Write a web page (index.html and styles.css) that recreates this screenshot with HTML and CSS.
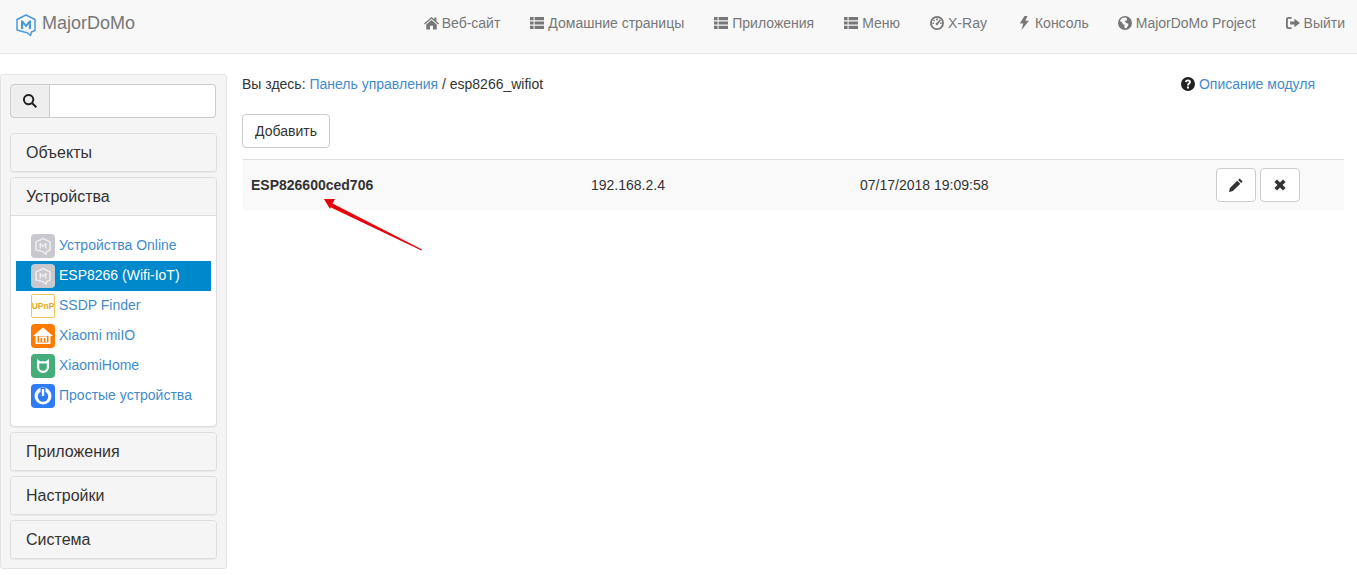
FILE: index.html
```html
<!DOCTYPE html>
<html lang="en">
<head>
    <meta charset="UTF-8">
    <meta name="viewport" content="width=device-width, initial-scale=1.0">
    <title>MajorDoMo</title>
    <link rel="stylesheet" href="styles.css">
</head>
<body>

    <svg class="sprites" width="0" height="0">
        <symbol id="i-home" viewBox="0 0 16 14"><path d="M8 0.500l3 2.600V1.200h2.200v3.800L16 7.500l-0.900 1L8 2.400 0.900 8.500 0 7.500z M2.400 8.600L8 3.800l5.600 4.800V14H9.600V10H6.400v4H2.400z"/></symbol>
        <symbol id="i-list" viewBox="0 0 14 12"><path d="M0 0h3.600v3.200H0z M4.600 0H14v3.200H4.600z M0 4.400h3.600v3.200H0z M4.600 4.400H14v3.200H4.600z M0 8.800h3.600V12H0z M4.600 8.800H14V12H4.600z"/></symbol>
        <symbol id="i-gauge" viewBox="0 0 14 14"><path fill-rule="evenodd" d="M7 0a7 7 0 1 1 0 14A7 7 0 0 1 7 0z M7 1.800a5.200 5.200 0 1 0 0 10.400A5.200 5.200 0 0 0 7 1.800z M6.100 2.600h1.800v1.600H6.100z M3 4.400l1.100-1 1.100 1.100-1.100 1z M9.900 3.300l1.100 1-3 3.600a1.200 1.200 0 1 1-1.200-1.100z M2.400 6.400H4V8H2.400z M10 6.400h1.600V8H10z"/></symbol>
        <symbol id="i-flash" viewBox="0 0 10 14"><path d="M5.500 0h3L6.400 4.800H10L2.500 14l1.800-6.600H0.800z"/></symbol>
        <symbol id="i-globe" viewBox="0 0 14 14"><path fill-rule="evenodd" d="M7 0a7 7 0 1 1 0 14A7 7 0 0 1 7 0z M5 1.800C3.600 2.400 2.400 3.600 1.900 5l2 1.200 1 2 1.700 0.600-0.400 2 1.200 1.600 1-0.200 1.600-2.400 0.400-2-2.200-0.800-1.400-1.400 1-1.200 1.200 0.200L9 2.200 7.200 1.400z"/></symbol>
        <symbol id="i-exit" viewBox="0 0 15 13"><path d="M6 0v2H3a1 1 0 0 0-1 1v7a1 1 0 0 0 1 1h3v2H2.600A2.600 2.600 0 0 1 0 10.400V2.600A2.600 2.600 0 0 1 2.600 0z M9 2l6 4.500L9 11V8.200H4.400V4.800H9z"/></symbol>
        <symbol id="i-help" viewBox="0 0 14 14"><path fill-rule="evenodd" d="M7 0a7 7 0 1 1 0 14A7 7 0 0 1 7 0z M6 9.400v2h2v-2z M7 2.600C5.400 2.600 4.300 3.400 4.100 5l1.800 0.300C6 4.700 6.300 4.300 7 4.300c0.600 0 1 0.300 1 0.800 0 0.900-2 1.300-2 3.400h1.900c0-1.400 2-1.700 2-3.600 0-1.400-1.200-2.300-2.900-2.300z"/></symbol>
        <symbol id="i-search" viewBox="0 0 14 14"><path fill-rule="evenodd" d="M5.600 0a5.600 5.600 0 0 1 4.600 8.800L14 12.600 12.600 14 8.800 10.200A5.600 5.600 0 1 1 5.600 0z M5.600 1.900a3.700 3.700 0 1 0 0 7.400 3.700 3.700 0 0 0 0-7.400z"/></symbol>
        <symbol id="i-pencil" viewBox="0 0 14 14"><path d="M10.600 0.400l3 3-1.500 1.500-3-3z M8.300 2.700l3 3-7.400 7.400L0 14l0.900-3.900z"/></symbol>
        <symbol id="i-remove" viewBox="0 0 12 12"><path d="M3 0.400L6 3.400l3-3L11.600 3l-3 3 3 3L9 11.600l-3-3-3 3L0.400 9l3-3-3-3z"/></symbol>
        <symbol id="i-brand" viewBox="0 0 20 23"><path d="M10 1l9 4.500v11l-3.500 1.500-1 3.500-3.500-3-1 0-9-2.500v-10.500z" fill="none" stroke="currentColor" stroke-width="1.500" stroke-linejoin="round"/><path d="M5 15V6.500h1.800L10 10.500l3.200-4H15V15h-2.200v-5L10 13.500 7.200 10v5z" fill="currentColor"/></symbol>
        <symbol id="i-mdm" viewBox="0 0 24 24"><path d="M12 4.500l7 3.400v8l-3 1.300-1 2.800-3-2.400-7-1.700V7.900z" fill="none" stroke="currentColor" stroke-width="1.500"/><path d="M8.500 14.500V9h1.300l2.200 2.600L14.200 9h1.300v5.500H14v-3.200L12 13.600l-2-2.300v3.200z" fill="currentColor"/></symbol>
    </svg>

    <nav class="navbar">
        <a class="brand" href="#">
            <svg class="brand-logo"><use href="#i-brand"/></svg>
            MajorDoMo
        </a>
        <div class="nav-links">
            <a href="#"><svg class="ico w15"><use href="#i-home"/></svg>Веб-сайт</a>
            <a href="#"><svg class="ico"><use href="#i-list"/></svg>Домашние страницы</a>
            <a href="#"><svg class="ico"><use href="#i-list"/></svg>Приложения</a>
            <a href="#"><svg class="ico"><use href="#i-list"/></svg>Меню</a>
            <a href="#"><svg class="ico"><use href="#i-gauge"/></svg>X-Ray</a>
            <a href="#"><svg class="ico"><use href="#i-flash"/></svg>Консоль</a>
            <a href="#" class="tight"><svg class="ico"><use href="#i-globe"/></svg>MajorDoMo Project</a>
            <a href="#"><svg class="ico"><use href="#i-exit"/></svg>Выйти</a>
        </div>
    </nav>

    <div class="page">
        <aside class="well">
            <div class="search-group">
                <span class="search-addon"><svg class="ico-search"><use href="#i-search"/></svg></span>
                <input type="text" class="search-input">
            </div>

            <div class="panel"><div class="panel-heading">Объекты</div></div>

            <div class="panel">
                <div class="panel-heading open">Устройства</div>
                <ul class="panel-body">
                    <li><a href="#">
                        <span class="app-icon grey"><svg><use href="#i-mdm"/></svg></span><span>Устройства Online</span>
                    </a></li>
                    <li class="active"><a href="#">
                        <span class="app-icon grey"><svg><use href="#i-mdm"/></svg></span><span>ESP8266 (Wifi-IoT)</span>
                    </a></li>
                    <li><a href="#">
                        <span class="app-icon upnp">UPnP</span><span>SSDP Finder</span>
                    </a></li>
                    <li><a href="#">
                        <span class="app-icon orange">
                            <svg viewBox="0 0 24 24"><path d="M12 3.500L22 12h-2.500v8h-15v-8H2z" fill="#fff"/><path d="M6.500 12h11v6.500h-11z" fill="#ff7a00"/><path d="M8 12.500h8V18h-1.500v-4h-1.700v4h-1.600v-4H9.500v4H8z" fill="#fff"/></svg>
                        </span><span>Xiaomi miIO</span>
                    </a></li>
                    <li><a href="#">
                        <span class="app-icon green">
                            <svg viewBox="0 0 24 24"><path d="M6 5l3 2.200h6L18 5v8a6 6 0 0 1-12 0z M8.200 9.500v3.500a3.800 3.800 0 0 0 7.600 0V9.500z" fill="#fff" fill-rule="evenodd"/></svg>
                        </span><span>XiaomiHome</span>
                    </a></li>
                    <li><a href="#">
                        <span class="app-icon blue">
                            <svg viewBox="0 0 24 24"><circle cx="12" cy="12" r="8.500" fill="#fff"/><circle cx="12" cy="12.500" r="5.200" fill="#2f7bf5"/><path d="M12 4v8" stroke="#2f7bf5" stroke-width="5"/><path d="M12 5v7" stroke="#fff" stroke-width="2.400"/></svg>
                        </span><span>Простые устройства</span>
                    </a></li>
                </ul>
            </div>

            <div class="panel"><div class="panel-heading">Приложения</div></div>
            <div class="panel"><div class="panel-heading">Настройки</div></div>
            <div class="panel"><div class="panel-heading">Система</div></div>
        </aside>

        <main class="content">
            <div class="crumbs-row">
                <div>Вы здесь: <a href="#">Панель управления</a> / esp8266_wifiot</div>
                <div class="help-link"><svg class="ico-help"><use href="#i-help"/></svg><a href="#">Описание модуля</a></div>
            </div>

            <button class="btn add-btn">Добавить</button>

            <div class="device-row">
                <b class="col-name">ESP826600ced706</b>
                <span class="col-ip">192.168.2.4</span>
                <span class="col-date">07/17/2018 19:09:58</span>
                <span class="col-actions">
                    <button class="btn btn-icon"><svg><use href="#i-pencil"/></svg></button>
                    <button class="btn btn-icon"><svg class="small"><use href="#i-remove"/></svg></button>
                </span>
            </div>
        </main>
    </div>

    <!-- red arrow drawn over the page -->
    <svg class="arrow" width="120" height="70" viewBox="0 0 120 70">
        <path d="M2 6L13 6 10.500 10.500 100 56.500 99.400 57.600 8.500 14.200 8 16z" fill="#e8000b"/>
    </svg>

</body>
</html>
```

FILE: styles.css
```css
* {
    box-sizing: border-box;
}
body {
    font-family: "Liberation Sans", Arial, sans-serif;
    font-size: 14px;
    line-height: 20px;
    color: #333;
    background-color: #fff;
    margin: 0;
    height: 575px;
    overflow: hidden;
    position: relative;
}
a {
    color: #428bca;
    text-decoration: none;
}
.sprites {
    position: absolute;
}

/* top bar */
.navbar {
    height: 54px;
    background-color: #f8f8f8;
    border-bottom: 1px solid #e7e7e7;
    display: flex;
    justify-content: space-between;
    align-items: center;
    padding: 0 12px 8px 16px;
}
.brand {
    display: flex;
    align-items: center;
    font-size: 18px;
    color: #777;
}
.brand-logo {
    width: 20px;
    height: 23px;
    margin: 5px 6px 0 0;
    color: #4a9ad8;
}
.nav-links {
    display: flex;
    gap: 30px;
}
.nav-links a {
    display: flex;
    align-items: center;
    color: #777;
}
.nav-links a.tight {
    margin-left: -1px;
}
.ico {
    width: 14px;
    height: 14px;
    margin-right: 4px;
    fill: #777;
}
.ico.w15 {
    width: 15px;
    margin-right: 3px;
}

/* sidebar */
.page {
    display: flex;
}
.well {
    width: 227px;
    height: 495px;
    margin-top: 20px;
    padding: 9px 9px 0 9px;
    background-color: #f5f5f5;
    border: 1px solid #e3e3e3;
    border-radius: 3px;
    flex: none;
}
.search-group {
    display: flex;
    height: 34px;
    margin-right: 1px;
    margin-bottom: 15px;
}
.search-addon {
    width: 40px;
    background-color: #eee;
    border: 1px solid #ccc;
    border-radius: 4px 0 0 4px;
    display: flex;
    align-items: center;
    justify-content: center;
}
.ico-search {
    width: 14px;
    height: 14px;
    fill: #222;
}
.search-input {
    flex: 1;
    min-width: 0;
    border: 1px solid #ccc;
    border-left: none;
    border-radius: 0 4px 4px 0;
    background-color: #fff;
}
.panel {
    background-color: #fff;
    border: 1px solid #ddd;
    border-radius: 4px;
    margin-bottom: 5px;
    box-shadow: 0 1px 1px rgba(0, 0, 0, 0.05);
}
.panel-heading {
    height: 37px;
    padding: 0 15px;
    font-size: 16px;
    line-height: 37px;
    background-color: #f5f5f5;
    border-radius: 3px;
}
.panel-heading.open {
    height: 38px;
    border-bottom: 1px solid #ddd;
    border-radius: 3px 3px 0 0;
}
.panel-body {
    list-style: none;
    margin: 0;
    padding: 15px 5px;
}
.panel-body a {
    display: flex;
    align-items: center;
    height: 30px;
    padding-left: 15px;
}
.panel-body a span:last-child {
    margin-top: -2px;
}
.panel-body .active a {
    background-color: #0088cc;
    color: #fff;
}
.app-icon {
    width: 24px;
    height: 24px;
    margin-right: 4px;
    border-radius: 4px;
    flex: none;
    display: flex;
    align-items: center;
    justify-content: center;
}
.app-icon svg {
    width: 24px;
    height: 24px;
}
.app-icon.grey {
    background-color: #c8c8ce;
    color: #eee;
}
.app-icon.upnp {
    background-color: #fff;
    border: 1px solid #ecc657;
    border-radius: 2px;
    color: #e5a81f;
    font-size: 8.500px;
    font-weight: bold;
}
.app-icon.orange {
    background-color: #ff7a00;
}
.app-icon.green {
    background-color: #45ad7a;
}
.app-icon.blue {
    background-color: #2f7bf5;
}

/* main area */
.content {
    flex: 1;
    padding: 20px 13px 0 15px;
}
.crumbs-row {
    display: flex;
    justify-content: space-between;
    padding-right: 29px;
}
.help-link {
    display: flex;
    align-items: center;
}
.ico-help {
    width: 14px;
    height: 14px;
    margin-right: 4px;
    fill: #222;
}
.btn {
    font-family: inherit;
    font-size: 14px;
    color: #333;
    background-color: #fff;
    border: 1px solid #ccc;
    border-radius: 4px;
    padding: 0;
}
.add-btn {
    display: block;
    width: 88px;
    height: 34px;
    margin-top: 20px;
}
.device-row {
    height: 51px;
    margin: 11px 0 0 1px;
    background-color: #f9f9f9;
    border-top: 1px solid #ddd;
    display: flex;
    align-items: center;
    padding-left: 8px;
}
.col-name {
    width: 340px;
}
.col-ip {
    width: 269px;
}
.col-date {
    width: 356px;
}
.col-actions {
    display: flex;
    gap: 4px;
}
.btn-icon {
    width: 40px;
    height: 34px;
    display: flex;
    align-items: center;
    justify-content: center;
}
.btn-icon svg {
    width: 14px;
    height: 14px;
    fill: #333;
}
.btn-icon svg.small {
    width: 12px;
    height: 12px;
}
.arrow {
    position: absolute;
    left: 322px;
    top: 193px;
}
```
